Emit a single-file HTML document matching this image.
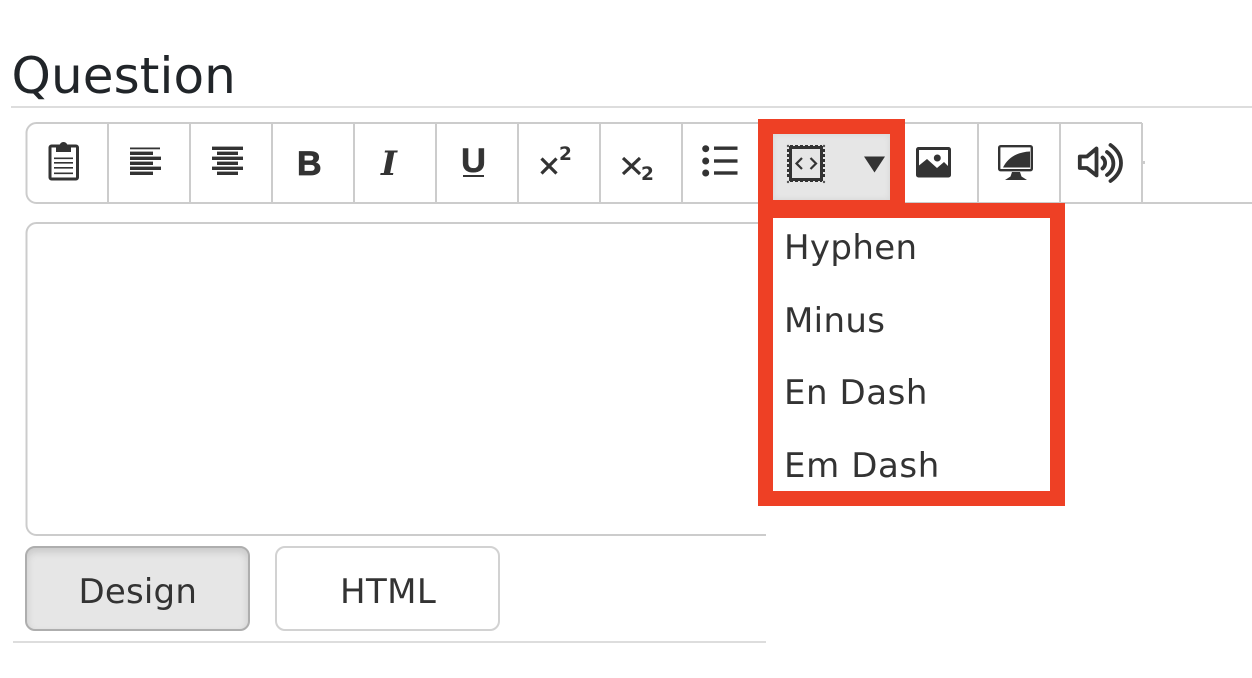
<!DOCTYPE html>
<html><head><meta charset="utf-8"><style>
html,body{margin:0;padding:0;background:#fff;width:1252px;height:678px;overflow:hidden}
svg{position:absolute;left:0;top:0}
text{font-family:"DejaVu Sans","Liberation Sans",sans-serif}
.btn{position:absolute;box-sizing:border-box;border-radius:10px}
</style></head><body>
<div class="btn" style="left:25px;top:546px;width:225px;height:85px;background:#e6e6e6;border:2px solid #aeaeae;box-shadow:inset 0 4px 8px rgba(0,0,0,.13)"></div>
<div class="btn" style="left:275px;top:546px;width:225px;height:85px;background:#fff;border:2px solid #d2d2d2"></div>
<div style="position:absolute;left:773px;top:134px;width:117px;height:66px;background:#e6e6e6;box-shadow:inset 0 0 7px rgba(0,0,0,.07)"></div>
<svg width="1252" height="678" viewBox="0 0 1252 678" xmlns="http://www.w3.org/2000/svg">
<text x="11.500" y="93" font-size="50" letter-spacing="0.100" fill="#212529">Question</text>
<rect x="11" y="106" width="1241" height="2" fill="#dddddd"/>
<!-- toolbar -->
<path d="M1142 123H36.500a10 10 0 0 0-10 10v60a10 10 0 0 0 10 10H1252" fill="none" stroke="#cccccc" stroke-width="2"/>
<g fill="#cccccc">
<rect x="107" y="123" width="2" height="80"/><rect x="189" y="123" width="2" height="80"/><rect x="271" y="123" width="2" height="80"/><rect x="353" y="123" width="2" height="80"/><rect x="435" y="123" width="2" height="80"/><rect x="517" y="123" width="2" height="80"/><rect x="599" y="123" width="2" height="80"/><rect x="681" y="123" width="2" height="80"/>
<rect x="977" y="123" width="2" height="80"/><rect x="1059" y="123" width="2" height="80"/><rect x="1141" y="123" width="2" height="80"/>
<rect x="1143" y="161" width="2" height="3"/>
</g>
<!-- editor -->
<path d="M766 223H36.500a10 10 0 0 0-10 10v292a10 10 0 0 0 10 10H766" fill="none" stroke="#cccccc" stroke-width="2"/>
<rect x="13" y="641" width="753" height="2" fill="#dddddd"/>
<!-- clipboard -->
<g fill="none" stroke="#333">
<rect x="50" y="146" width="27.500" height="33" rx="1.500" stroke-width="3"/>
<path d="M54 158.300h19M54 162.800h19M54 167.800h19M54 173.300h19" stroke-width="1.700"/>
</g>
<path d="M56 145.500h15v6.500H56zM59.500 146a4 4 0 0 1 8 0z" fill="#333"/>
<!-- align left / center -->
<g fill="#333">
<rect x="130" y="147.500" width="30" height="1.800"/><rect x="130" y="151.600" width="23" height="3.400"/><rect x="130" y="156.600" width="31" height="3.400"/><rect x="130" y="161.600" width="23" height="3.400"/><rect x="130" y="166.600" width="31" height="3.400"/><rect x="130" y="171.600" width="23" height="3.400"/>
<rect x="212" y="146.600" width="31" height="3.400"/><rect x="217" y="151.600" width="21" height="3.400"/><rect x="212" y="156.600" width="31" height="3.400"/><rect x="217" y="161.600" width="21" height="3.400"/><rect x="212" y="166.600" width="31" height="3.400"/><rect x="217" y="171.600" width="21" height="3.400"/>
</g>
<text x="297" y="175" font-size="34" font-weight="700" fill="#333" stroke="#333" stroke-width="0.800" style="font-family:'Liberation Sans',sans-serif">B</text>
<text x="381" y="175" font-size="34" font-weight="700" font-style="italic" fill="#333" style="font-family:'DejaVu Serif','Liberation Serif',serif">I</text>
<text x="461" y="172" font-size="34.500" font-weight="700" fill="#333" stroke="#333" stroke-width="0.500" style="font-family:'Liberation Sans',sans-serif" textLength="25" lengthAdjust="spacingAndGlyphs">U</text>
<rect x="463" y="175" width="21" height="2" fill="#333"/>
<!-- x2 -->
<path d="M541.500 158.500l15 15M556.500 158.500l-15 15M623 158l17 16M640 158l-17 16" stroke="#333" stroke-width="3.200" fill="none"/>
<text x="559" y="160" font-size="18.500" font-weight="700" fill="#333">2</text>
<text x="641" y="180" font-size="18.500" font-weight="700" fill="#333">2</text>
<!-- list -->
<g fill="#333"><circle cx="705.700" cy="148.700" r="3.500"/><circle cx="705.700" cy="161" r="3.500"/><circle cx="705.700" cy="173" r="3.500"/>
<rect x="714" y="146.500" width="23.500" height="3.400"/><rect x="714" y="159.300" width="23.500" height="3.400"/><rect x="714" y="171.300" width="23.500" height="3.400"/></g>
<!-- red -->
<path fill-rule="evenodd" d="M758 119H905V203H1065V506H758ZM773 134V200H890V134ZM773 218V491H1050V218Z" fill="#ee4025"/>
<!-- chip -->
<rect x="790.500" y="147.500" width="31" height="32" fill="none" stroke="#333" stroke-width="3"/>
<path d="M790 146.500h32M790 180.500h32M788.500 149v29M823.500 149v29" fill="none" stroke="#333" stroke-width="3" stroke-dasharray="3 2"/>
<g fill="#555"><circle cx="788" cy="146" r="1.200"/><circle cx="824" cy="146" r="1.200"/><circle cx="788" cy="182" r="1.200"/><circle cx="824" cy="182" r="1.200"/></g>
<path d="M802 158l-5.500 5.500 5.500 5.500M810.500 158l5.500 5.500-5.500 5.500" fill="none" stroke="#333" stroke-width="2.200"/>
<path d="M864 156.500H885L874.500 172.500Z" fill="#333"/>
<!-- image -->
<path fill-rule="evenodd" d="M918.500 147H948.500a2.500 2.500 0 0 1 2.500 2.500V175a2.500 2.500 0 0 1-2.500 2.500H918.500a2.500 2.500 0 0 1-2.500-2.500V149.500A2.500 2.500 0 0 1 918.500 147ZM919 150V165.500L927 159 937 168 944 162 948 166V150Z" fill="#333"/>
<circle cx="937.300" cy="158" r="3.500" fill="#333"/>
<!-- monitor -->
<rect x="999.200" y="146.200" width="32.600" height="24" rx="1.500" fill="none" stroke="#333" stroke-width="2.400"/>
<path d="M1003 167.500C1008 157 1018 152 1030 151.500V167.500Z" fill="#333"/>
<path d="M1012 172H1020L1021.500 176.500L1027 180H1005L1010.500 176.500Z" fill="#333"/>
<!-- speaker -->
<path d="M1079.800 156.500H1087L1096.500 148.500V175.500L1087 168H1079.800Z" fill="none" stroke="#333" stroke-width="3.800" stroke-linejoin="round"/>
<path d="M1102.500 157.500C1106 160.500 1106 165.500 1102.500 168.500M1107 152C1115.500 158 1115.500 169 1107 175M1110.500 145C1124.500 155 1124.500 171 1110.500 181" fill="none" stroke="#333" stroke-width="3.800" stroke-linecap="round"/>
<!-- text -->
<g font-size="34" fill="#333333">
<text x="784" y="259" letter-spacing="0.350">Hyphen</text>
<text x="784" y="332" letter-spacing="0.350">Minus</text>
<text x="784" y="404" letter-spacing="0.550">En Dash</text>
<text x="784" y="477" letter-spacing="0.600">Em Dash</text>
<text x="78.500" y="603" letter-spacing="0.200">Design</text>
<text x="340" y="603" letter-spacing="0.400">HTML</text>
</g>
</svg>
</body></html>
